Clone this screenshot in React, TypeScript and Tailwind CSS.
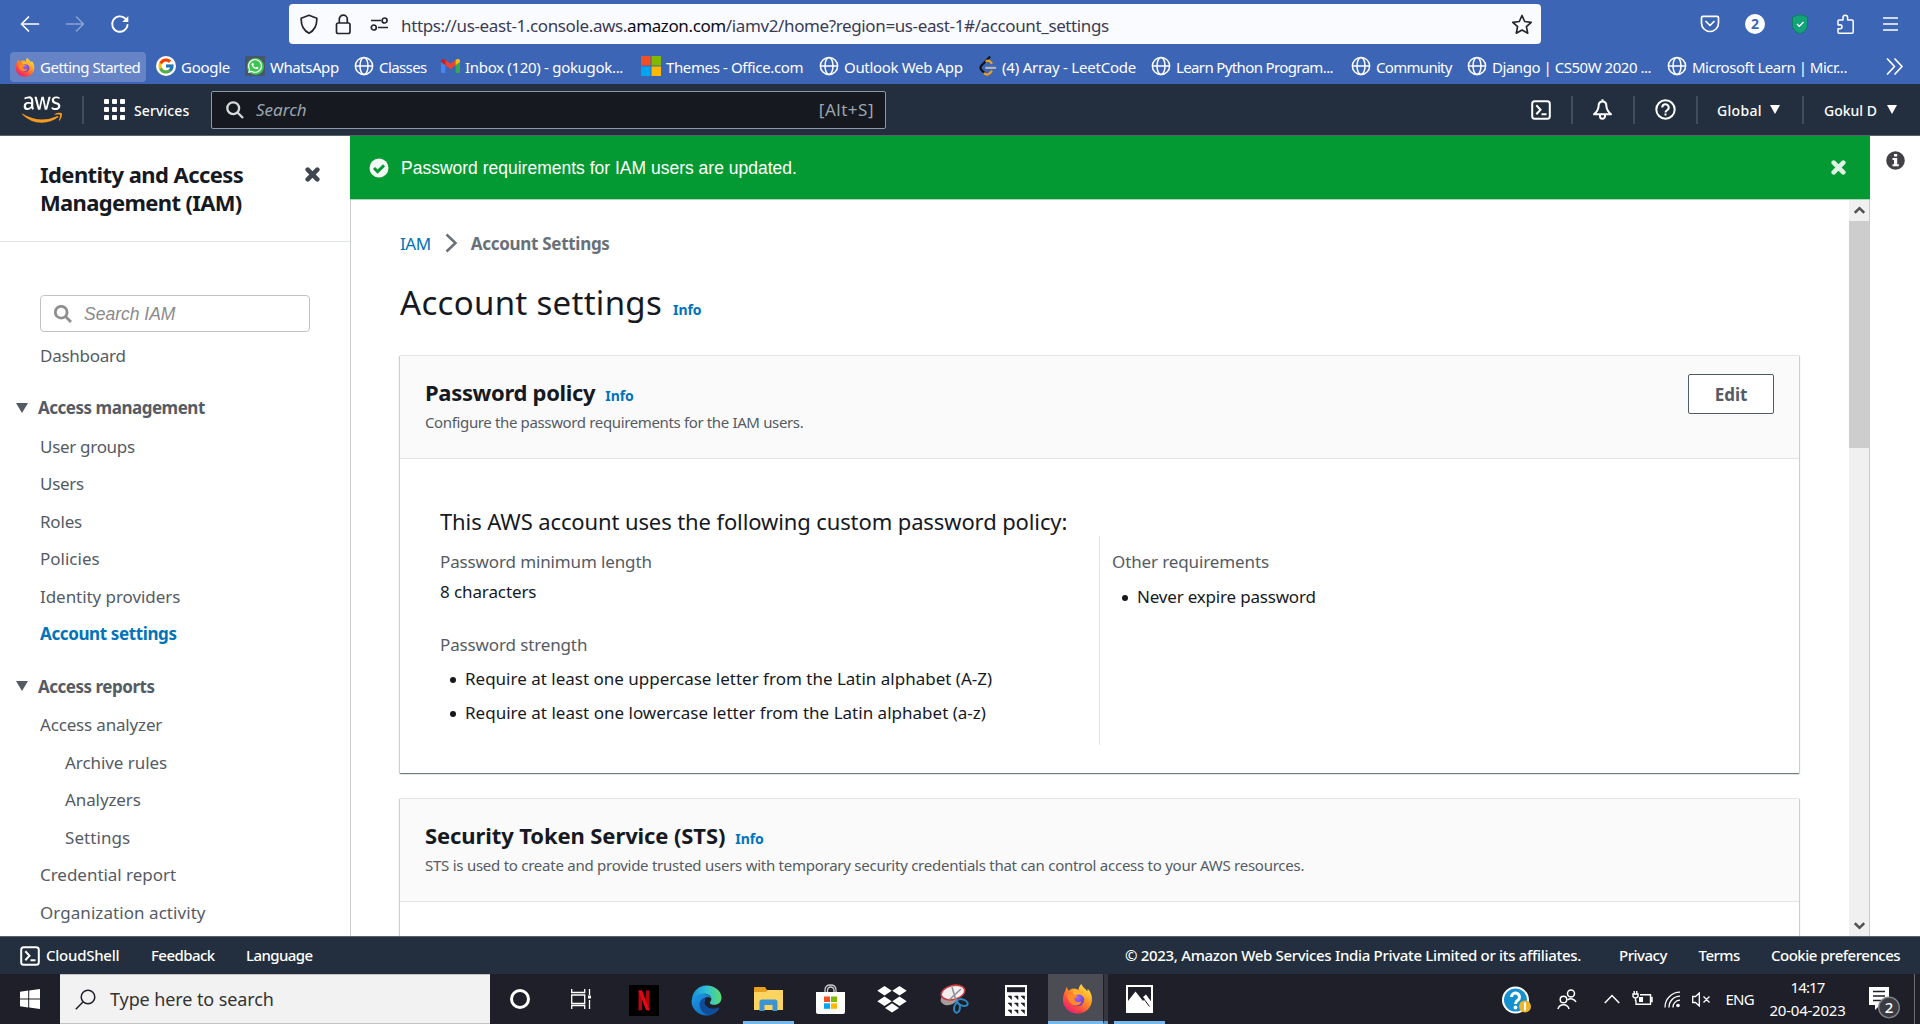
import type { ReactNode } from "react";
import { FcGoogle } from "react-icons/fc";
import { FaAws, FaWhatsapp } from "react-icons/fa";

const NOTO = "font-['Noto_Sans',sans-serif]";

/* ---------- drawings ---------- */

function Firefox({ size }: { size: number }) {
  return (
    <svg width={size} height={size} viewBox="0 0 32 32" className="shrink-0">
      <defs>
        <linearGradient id="ffBody" x1="0.85" y1="0.1" x2="0.2" y2="1">
          <stop offset="0" stopColor="#ffe14a" />
          <stop offset="0.35" stopColor="#ff9a1f" />
          <stop offset="0.7" stopColor="#ff4a45" />
          <stop offset="1" stopColor="#e5187c" />
        </linearGradient>
        <radialGradient id="ffCore" cx="0.5" cy="0.35" r="0.7">
          <stop offset="0" stopColor="#a366f5" />
          <stop offset="1" stopColor="#5a3bc4" />
        </radialGradient>
      </defs>
      <path
        d="M20 1c1 3 4 4.500 6 7.500c.6-.8.600-1.500.500-2.500C30 9.500 31 13.500 31 17c0 8-6.500 14.500-15 14.500S1 25 1 17.500C1 13.500 2 10 3.500 8c.1-1.500.7-3 1.700-4c.2 1.800.8 3 2 4c1-1 2.800-2.300 4.800-2.300c2.500 0 4 .8 5 1.800C17 5 18.300 2.500 20 1z"
        fill="url(#ffBody)"
      />
      <circle cx="16" cy="17" r="7" fill="url(#ffCore)" />
      <path d="M5 13c3-2 6-2 8-.5c1.500 0 2.800.3 3.300 1c-.5 1.400-3 1.400-3.300 2.500c0 1 .3 2 1.500 3c2 1.300 4 0 5.500.3c-1 3.500-4.500 4.700-8 3.500C8 21.500 6 17.500 5 13z" fill="#ff8a2b" />
      <path d="M12 6.500c2 .3 5 1.500 7 4c3-1 5 2 4.500 6c-.5-2-2.500-4-4.500-4.500c-3-.5-5 0-6.500.5C11 11 11 8 12 6.500z" fill="#ffb52e" />
    </svg>
  );
}

function GoogleMark() {
  return (
    <span className="flex size-5 shrink-0 items-center justify-center rounded-full bg-white">
      <FcGoogle size={18} />
    </span>
  );
}

function Globe() {
  return (
    <svg width="20" height="20" viewBox="0 0 20 20" fill="none" stroke="#fff" strokeWidth="1.500" className="shrink-0">
      <circle cx="10" cy="10" r="8.600" />
      <ellipse cx="10" cy="10" rx="4" ry="8.600" />
      <path d="M1.500 10h17" />
    </svg>
  );
}

function WhatsApp() {
  return (
    <span className="flex size-5 shrink-0 items-center justify-center bg-[#47576a]">
      <span className="flex size-[17px] items-center justify-center rounded-full bg-[#3fc351]">
        <FaWhatsapp size={16} color="#fff" />
      </span>
    </span>
  );
}

function Gmail() {
  return (
    <svg width="19" height="14" viewBox="0 0 19 14" className="shrink-0">
      <path d="M0 2v11q0 1 1 1h3.400V5z" fill="#4285f4" />
      <path d="M19 2v11q0 1-1 1h-3.400V5z" fill="#34a853" />
      <path d="M4.400 1v5.200L9.500 10l5.100-3.800V1L9.500 4.800z" fill="#ea4335" />
      <path d="M0 1.800C0 0 2 -.6 3.300.300L4.400 1v5.200L0 3z" fill="#c5221f" />
      <path d="M19 1.800C19 0 17-.6 15.700.300L14.600 1v5.200L19 3z" fill="#fbbc04" />
    </svg>
  );
}

function FourSquares({ size }: { size: number }) {
  return (
    <svg width={size} height={size} viewBox="0 0 21 21" className="shrink-0">
      <path d="M0 0h10v10H0z" fill="#f25022" />
      <path d="M11 0h10v10H11z" fill="#7fba00" />
      <path d="M0 11h10v10H0z" fill="#00a4ef" />
      <path d="M11 11h10v10H11z" fill="#ffb900" />
    </svg>
  );
}

function LeetCode() {
  return (
    <svg width="18" height="20" viewBox="0 0 18 20" fill="none" strokeWidth="2.200" strokeLinecap="round" className="shrink-0">
      <path d="M10.500 1.200L2.500 9.500q-2 2.300 0 4.500l3 3" stroke="#111" />
      <path d="M5.500 17.500q2.500 2.300 5 0l2-2M7.500 5.200l.5-.4q1.800-.7 3 .7l1.500 1.500" stroke="#f0a21f" />
      <path d="M7.200 11.800h9" stroke="#b3b3b3" />
    </svg>
  );
}

function CloudShell({ size }: { size: number }) {
  return (
    <svg width={size} height={size} viewBox="0 0 20 20" fill="none" stroke="#fff" strokeWidth="2" className="shrink-0">
      <rect x="1.200" y="1.200" width="17.600" height="17.600" rx="2.500" />
      <path d="M5.300 5.300l4.200 4.500l-4.200 4.500M10.500 14.300h5" />
    </svg>
  );
}

function Magnifier({ size, color, width }: { size: number; color: string; width: number }) {
  return (
    <svg width={size} height={size} viewBox="0 0 18 18" fill="none" stroke={color} strokeWidth={width} className="shrink-0">
      <circle cx="7.200" cy="7.200" r="5.900" />
      <path d="M11.500 11.500L17 17" />
    </svg>
  );
}

function Cross({ color }: { color: string }) {
  return (
    <svg width="15" height="15" viewBox="0 0 15 15" stroke={color} strokeWidth="4.600" strokeLinecap="round" className="shrink-0">
      <path d="M2.700 2.700l9.600 9.600M12.300 2.700l-9.600 9.600" />
    </svg>
  );
}

function Down({ w, h, color }: { w: number; h: number; color: string }) {
  return (
    <svg width={w} height={h} viewBox="0 0 10 10" preserveAspectRatio="none" className="shrink-0">
      <path d="M0 0h10L5 10z" fill={color} />
    </svg>
  );
}

/* ---------- browser chrome ---------- */

function Toolbar() {
  return (
    <div className="flex h-12 items-center">
      <svg width="20" height="18" viewBox="0 0 20 18" fill="none" stroke="#fff" strokeWidth="1.700" strokeLinecap="round" strokeLinejoin="round" className="ml-5 shrink-0">
        <path d="M18.500 9H1.500M8.500 2L1.500 9l7 7" />
      </svg>
      <svg width="20" height="18" viewBox="0 0 20 18" fill="none" stroke="#8aa2d6" strokeWidth="1.500" strokeLinecap="round" strokeLinejoin="round" className="ml-[25px] shrink-0">
        <path d="M1.500 9h17M11.500 2l7 7l-7 7" />
      </svg>
      <svg width="20" height="20" viewBox="0 0 20 20" fill="none" stroke="#fff" strokeWidth="1.900" strokeLinecap="round" className="ml-[25px] shrink-0">
        <path d="M17.500 11a7.700 7.700 0 1 1-2.300-6.500" />
        <path d="M18.300 2v6h-6z" fill="#fff" stroke="none" />
      </svg>
      <div className="ml-[159px] flex h-10 w-[1252px] shrink-0 items-center rounded-[4px] bg-[#fafbfe] text-[#15141a]">
        <svg width="20" height="20" viewBox="0 0 20 20" fill="none" stroke="#26262e" strokeWidth="1.700" strokeLinejoin="round" className="ml-[10px]">
          <path d="M10 1.200l7.800 3c.3 6.500-2 12-7.800 15c-5.800-3-8.100-8.500-7.800-15z" />
        </svg>
        <svg width="17" height="21" viewBox="0 0 17 21" fill="none" stroke="#26262e" strokeWidth="1.700" className="ml-[16px]">
          <rect x="1.500" y="9" width="13.500" height="10.500" rx="1.800" />
          <path d="M4.300 9V5.200a4 4 0 0 1 8 0V9" />
        </svg>
        <svg width="19" height="14" viewBox="0 0 19 14" fill="none" stroke="#26262e" strokeWidth="1.700" className="ml-[18px]">
          <path d="M1 3.500h10M8 10.500h10" />
          <circle cx="14.600" cy="3.500" r="2.500" />
          <circle cx="3.800" cy="10.500" r="2.500" />
        </svg>
        <span className="ml-[12px] mt-[3px] flex-1 whitespace-nowrap text-[17px] leading-none tracking-[-0.38px] text-[#3b3b55]">
          https://us-east-1.console.aws.<span className="text-[#0c0c13]">amazon.com</span>/iamv2/home?region=us-east-1#/account_settings
        </span>
        <svg width="22" height="21" viewBox="0 0 22 21" fill="none" stroke="#26262e" strokeWidth="1.700" strokeLinejoin="round" className="mr-[8px]">
          <path d="M11 1.500l2.700 6l6.500.8l-4.800 4.400l1.300 6.500L11 16l-5.700 3.200l1.300-6.500L1.800 8.300l6.500-.8z" />
        </svg>
      </div>
      <svg width="20" height="18" viewBox="0 0 20 18" fill="none" stroke="#fff" strokeWidth="1.700" strokeLinecap="round" strokeLinejoin="round" className="ml-[159px] shrink-0">
        <path d="M3 1.300h14q1.500 0 1.500 1.500V8a8.500 8.500 0 0 1-17 0V2.800q0-1.500 1.500-1.500z" />
        <path d="M6 6.500l4 4l4-4" />
      </svg>
      <span className="ml-[25px] flex size-5 shrink-0 items-center justify-center rounded-full bg-white text-[14px] font-bold leading-none text-[#3d65b5]">2</span>
      <svg width="18" height="20" viewBox="0 0 18 20" className="ml-[26px] shrink-0">
        <path d="M9 .5l7.500 2.500v8c0 4-3 7-7.500 8.700C4.500 18 1.500 15 1.500 11V3z" fill="#12a378" stroke="#0c7f63" />
        <path d="M6 10l2.300 2.300L12.500 8" fill="none" stroke="#fff" strokeWidth="1.300" />
      </svg>
      <svg width="19" height="21" viewBox="0 0 19 21" fill="none" stroke="#fff" strokeWidth="1.500" strokeLinejoin="round" className="ml-[27px] shrink-0">
        <path d="M2 11V7q0-1 1-1h4V3.500a2.300 2.300 0 0 1 4.600 0V6H16q1.200 0 1.200 1.200V18q0 1.300-1.200 1.300H3Q2 19.300 2 18v-3.300h2a2 2 0 0 0 0-4z" />
      </svg>
      <svg width="15" height="14" viewBox="0 0 15 14" stroke="#fff" strokeWidth="1.600" className="ml-[28px] shrink-0">
        <path d="M0 1h15M0 7h15M0 13h15" />
      </svg>
    </div>
  );
}

type Bookmark = { label: string; icon: ReactNode; cell: string; text: string };

const bookmarks: Bookmark[] = [
  { label: "Google", icon: <GoogleMark />, cell: "w-[89px]", text: "tracking-[-0.27px]" },
  { label: "WhatsApp", icon: <WhatsApp />, cell: "w-[109px]", text: "tracking-[-0.45px]" },
  { label: "Classes", icon: <Globe />, cell: "w-[87px]", text: "tracking-[-0.6px]" },
  { label: "Inbox (120) - gokugok...", icon: <Gmail />, cell: "w-[200px]", text: "tracking-[-0.31px]" },
  { label: "Themes - Office.com", icon: <FourSquares size={20} />, cell: "w-[178px]", text: "tracking-[-0.38px]" },
  { label: "Outlook Web App", icon: <Globe />, cell: "w-[160px]", text: "tracking-[-0.33px]" },
  { label: "(4) Array - LeetCode", icon: <LeetCode />, cell: "w-[172px]", text: "tracking-[-0.21px]" },
  { label: "Learn Python Program...", icon: <Globe />, cell: "w-[200px]", text: "tracking-[-0.63px]" },
  { label: "Community", icon: <Globe />, cell: "w-[116px]", text: "tracking-[-0.7px]" },
  { label: "Django | CS50W 2020 ...", icon: <Globe />, cell: "w-[200px]", text: "tracking-[-0.47px]" },
  { label: "Microsoft Learn | Micr...", icon: <Globe />, cell: "w-[219px]", text: "tracking-[-0.49px]" },
];

function Bookmarks() {
  return (
    <div className="flex h-9 items-center whitespace-nowrap text-[15px] leading-none text-white">
      <div className="ml-[10px] mr-[10px] mt-px flex h-[30px] w-[136px] shrink-0 items-center gap-[5px] rounded-[4px] bg-[#6683c6] pl-[5px] tracking-[-0.5px]">
        <Firefox size={20} />
        <span className="pt-px">Getting Started</span>
      </div>
      {bookmarks.map((b) => (
        <div key={b.label} className={`flex shrink-0 items-center gap-[5px] ${b.cell} ${b.text}`}>
          {b.icon}
          <span className="pt-[2px]">{b.label}</span>
        </div>
      ))}
      <svg width="18" height="17" viewBox="0 0 18 17" fill="none" stroke="#fff" strokeWidth="1.700" strokeLinecap="round" strokeLinejoin="round" className="shrink-0">
        <path d="M1.500 1l7 7.500l-7 7.500M9 1l7 7.500L9 16" />
      </svg>
    </div>
  );
}

/* ---------- AWS header ---------- */

const rule = "h-7 w-[2px] shrink-0 bg-[#414d5c]";

function AwsHeader() {
  return (
    <header className="flex h-[52px] items-center border-b border-[#59636d] bg-[#232f3e] text-[14px] font-medium leading-none text-white">
      <svg width="0" height="0" className="w-0">
        <linearGradient id="awsTwoTone" gradientUnits="userSpaceOnUse" x1="0" y1="0" x2="0" y2="512">
          <stop offset="0.56" stopColor="#fff" />
          <stop offset="0.56" stopColor="#f79a1e" />
        </linearGradient>
      </svg>
      <FaAws className="ml-[22px] h-[35px] w-[40px] shrink-0" preserveAspectRatio="none" fill="url(#awsTwoTone)" />
      <span className={`ml-5 ${rule}`} />
      <span className="ml-5 grid shrink-0 grid-cols-3 gap-[3px]">
        {Array.from({ length: 9 }, (_, i) => (
          <span key={i} className="size-[5px] rounded-[1px] bg-white" />
        ))}
      </span>
      <span className="ml-[9px] mt-[2px] w-[77px] shrink-0 tracking-[0.1px]">Services</span>
      <div className="flex h-[38px] w-[675px] shrink-0 items-center rounded-[2px] border border-[#8d99a8] bg-[#16191f] pl-[14px] pr-[11px] text-[17px] font-normal text-[#9aa5b1]">
        <Magnifier size={18} color="#d5dbdb" width={2.3} />
        <span className="ml-3 flex-1 italic">Search</span>
        <span className="tracking-[0.5px]">[Alt+S]</span>
      </div>
      <span className="flex-1" />
      <CloudShell size={20} />
      <span className={`ml-5 ${rule}`} />
      <svg width="21" height="21" viewBox="0 0 21 21" fill="none" stroke="#fff" strokeWidth="2" strokeLinejoin="round" className="ml-[19px] shrink-0">
        <path d="M10.500 2.500c-2.600 0-3.900 2-3.900 4.500c0 3.500-1.500 5.500-4.600 8.300h17c-3.100-2.800-4.600-4.800-4.600-8.300c0-2.500-1.300-4.500-3.900-4.500zM10.500 .3v2.200M8 16v1.300a2.500 2.500 0 0 0 5 0V16" />
      </svg>
      <span className={`ml-5 ${rule}`} />
      <svg width="21" height="21" viewBox="0 0 21 21" fill="none" stroke="#fff" strokeWidth="2" className="ml-5 shrink-0">
        <circle cx="10.500" cy="10.500" r="9.200" />
        <path d="M7.300 8.500a3.200 3.200 0 1 1 4.700 2.800q-1.500.8-1.500 2.200M10.500 14.600v2" />
      </svg>
      <span className={`ml-5 ${rule}`} />
      <span className="ml-[19px] mt-[2px] w-[53px] shrink-0 tracking-[0.3px]">Global</span>
      <Down w={10} h={9} color="#fff" />
      <span className={`ml-[22px] ${rule}`} />
      <span className="ml-5 mt-[2px] w-[63px] shrink-0">Gokul D</span>
      <Down w={10} h={9} color="#fff" />
      <span className="w-[23px] shrink-0" />
    </header>
  );
}

/* ---------- IAM sidebar ---------- */

type NavItem = { label: string; text?: string; nested?: boolean; active?: boolean };

const management: NavItem[] = [
  { label: "User groups", text: "tracking-[-0.3px]" },
  { label: "Users", text: "tracking-[-0.3px]" },
  { label: "Roles", text: "tracking-[-0.2px]" },
  { label: "Policies", text: "tracking-[0px]" },
  { label: "Identity providers", text: "tracking-[-0.06px]" },
  { label: "Account settings", text: "tracking-[-0.38px]", active: true },
];

const reports: NavItem[] = [
  { label: "Access analyzer", text: "tracking-[-0.17px]" },
  { label: "Archive rules", text: "tracking-[-0.06px]", nested: true },
  { label: "Analyzers", text: "tracking-[-0.1px]", nested: true },
  { label: "Settings", text: "tracking-[0.08px]", nested: true },
  { label: "Credential report", text: "tracking-[-0.03px]" },
  { label: "Organization activity", text: "tracking-[0.06px]" },
];

function NavGroup({ title, items }: { title: string; items: NavItem[] }) {
  return (
    <>
      <div className="mb-px mt-[15px] flex h-[37.500px] items-center gap-[10px] pl-4 font-bold tracking-[-0.48px]">
        <Down w={12} h={10} color="#545b64" />
        {title}
      </div>
      {items.map((n) => (
        <div
          key={n.label}
          className={`flex h-[37.500px] items-center ${n.nested ? "pl-[65px]" : "pl-10"} ${n.text ?? ""} ${n.active ? "font-bold text-[#0073bb]" : ""}`}
        >
          {n.label}
        </div>
      ))}
    </>
  );
}

function Sidebar() {
  return (
    <aside className="w-[351px] shrink-0 overflow-hidden border-r border-[#c9cccd] bg-white text-[17px] leading-none text-[#545b64]">
      <div className="flex h-[106px] justify-between border-b border-[#e3e6e6] pl-10 pr-[30px] pt-[24px]">
        <h2 className="text-[22px] font-bold leading-[28px] tracking-[-0.57px] text-[#16191f]">
          Identity and Access
          <br />
          <span className="tracking-[-0.65px]">Management (IAM)</span>
        </h2>
        <span className="pt-[7px]">
          <Cross color="#414750" />
        </span>
      </div>
      <div className="ml-10 mt-[53px] flex h-[37px] w-[270px] items-center rounded-[4px] border border-[#c0c4c6] pl-[13px]">
        <Magnifier size={18} color="#8f8f8f" width={2.8} />
        <span className="ml-3 pt-[2px] font-['Liberation_Sans',sans-serif] text-[17.500px] italic text-[#8a8a8a]">Search IAM</span>
      </div>
      <div className="mt-[4.500px] flex h-[37.500px] items-center pl-10 tracking-[-0.25px]">Dashboard</div>
      <NavGroup title="Access management" items={management} />
      <NavGroup title="Access reports" items={reports} />
    </aside>
  );
}

/* ---------- content ---------- */

function Info() {
  return <a className="text-[14px] font-bold tracking-[-0.1px] text-[#0073bb]">Info</a>;
}

function PanelHeader({
  title,
  titleClass,
  desc,
  descClass,
  action,
}: {
  title: string;
  titleClass: string;
  desc: string;
  descClass: string;
  action?: ReactNode;
}) {
  return (
    <div className="flex h-[103px] justify-between border-b border-[#e3e6e6] bg-[#fafafa] pl-[25px] pr-[25px]">
      <div className="pt-[22px]">
        <div className="flex h-[29px] items-baseline gap-[10px] leading-[29px]">
          <h2 className={`text-[22px] font-bold text-[#16191f] ${titleClass}`}>{title}</h2>
          <Info />
        </div>
        <p className={`mt-[3px] whitespace-nowrap text-[15px] leading-6 text-[#545b64] ${descClass}`}>{desc}</p>
      </div>
      {action}
    </div>
  );
}

const panel = "border-t border-[#e3e6e6] bg-white shadow-[0_1px_1px_0_rgba(0,28,36,.4),1px_1px_1px_0_rgba(0,28,36,.15),-1px_1px_1px_0_rgba(0,28,36,.15)]";

function Bullet({ children, className }: { children: ReactNode; className: string }) {
  return (
    <li className={`flex h-[34px] items-center pl-[10px] text-[#16191f] ${className}`}>
      <span className="mr-[9px] mt-[2px] size-[6px] rounded-full bg-[#16191f]" />
      {children}
    </li>
  );
}

function Content() {
  return (
    <main className="min-w-0 flex-1 overflow-hidden bg-white pl-[49px] pr-[50px]">
      <nav className="mt-[31px] flex h-6 items-center text-[17px] leading-none">
        <a className="text-[#0073bb] tracking-[-0.4px]">IAM</a>
        <svg width="13" height="20" viewBox="0 0 13 20" fill="none" stroke="#687078" strokeWidth="2.500" className="ml-[14px] mr-[13px]">
          <path d="M1.500 1.500l9 8.500l-9 8.500" />
        </svg>
        <span className="font-bold tracking-[-0.3px] text-[#687078]">Account Settings</span>
      </nav>
      <div className="mt-[24px] flex h-12 items-baseline gap-[11px] leading-[48px]">
        <h1 className="text-[33px] tracking-[0.3px] text-[#16191f]">Account settings</h1>
        <Info />
      </div>

      <section className={`mt-[28px] h-[418px] ${panel}`}>
        <PanelHeader
          title="Password policy"
          titleClass="tracking-[-0.33px]"
          desc="Configure the password requirements for the IAM users."
          descClass="tracking-[-0.36px]"
          action={
            <button className="mt-[18px] h-10 w-[86px] rounded-[2px] border border-[#545b64] bg-white text-[17px] font-bold leading-none text-[#545b64]">
              Edit
            </button>
          }
        />
        <div className="pl-10 pt-[47px] text-[17px] leading-none text-[#545b64]">
          <h3 className="flex h-[30px] items-center text-[22px] tracking-[-0.11px] text-[#16191f]">
            This AWS account uses the following custom password policy:
          </h3>
          <div className="flex h-[209px]">
            <div className="w-[659px] pt-[10.500px]">
              <p className="flex h-[30px] items-center tracking-[-0.13px]">Password minimum length</p>
              <p className="flex h-[30px] items-center tracking-[-0.1px] text-[#16191f]">8 characters</p>
              <p className="mt-[23px] flex h-[30px] items-center tracking-[-0.13px]">Password strength</p>
              <ul className="mt-[2px]">
                <Bullet className="tracking-[0px]">Require at least one uppercase letter from the Latin alphabet (A-Z)</Bullet>
                <Bullet className="tracking-[0.01px]">Require at least one lowercase letter from the Latin alphabet (a-z)</Bullet>
              </ul>
            </div>
            <div className="border-l border-[#e3e6e6] pl-3 pt-[10.500px]">
              <p className="flex h-[30px] items-center tracking-[-0.12px]">Other requirements</p>
              <ul className="mt-[3px]">
                <Bullet className="tracking-[-0.19px]">Never expire password</Bullet>
              </ul>
            </div>
          </div>
        </div>
      </section>

      <section className={`mt-[25px] h-[300px] ${panel}`}>
        <PanelHeader
          title="Security Token Service (STS)"
          titleClass="tracking-[-0.1px]"
          desc="STS is used to create and provide trusted users with temporary security credentials that can control access to your AWS resources."
          descClass="tracking-[-0.255px]"
        />
      </section>
    </main>
  );
}

function Scrollbar() {
  return (
    <div className="flex w-[21px] shrink-0 flex-col items-center border-r border-[#c9cccd] bg-[#f0f0f0]">
      <div className="flex h-[21px] items-center justify-center pb-[2px]">
        <svg width="11" height="8" viewBox="0 0 11 8" fill="none" stroke="#505050" strokeWidth="2.500">
          <path d="M.8 6.800l4.700-4.600l4.700 4.600" />
        </svg>
      </div>
      <div className="h-[227px] w-full bg-[#cdcdcd]" />
      <div className="flex-1" />
      <div className="flex h-[21px] items-center justify-center">
        <svg width="11" height="8" viewBox="0 0 11 8" fill="none" stroke="#505050" strokeWidth="2.500">
          <path d="M.8 1.200l4.700 4.600l4.700-4.600" />
        </svg>
      </div>
    </div>
  );
}

/* ---------- footer ---------- */

function Footer() {
  return (
    <footer className="flex h-[38px] shrink-0 items-center border-t border-[#59636d] bg-[#232f3e] pl-5 pr-5 text-[15px] font-medium leading-none text-white">
      <CloudShell size={20} />
      <span className="ml-[6px] w-[105px] shrink-0 tracking-[-0.25px]">CloudShell</span>
      <span className="w-[95px] shrink-0 tracking-[-0.57px]">Feedback</span>
      <span className="shrink-0 tracking-[-0.6px]">Language</span>
      <span className="flex-1" />
      <span className="w-[494px] shrink-0 whitespace-nowrap tracking-[-0.32px]">© 2023, Amazon Web Services India Private Limited or its affiliates.</span>
      <span className="w-[79.500px] shrink-0 tracking-[-0.5px]">Privacy</span>
      <span className="w-[72.500px] shrink-0 tracking-[-0.5px]">Terms</span>
      <span className="w-[129px] shrink-0 whitespace-nowrap tracking-[-0.5px]">Cookie preferences</span>
    </footer>
  );
}

/* ---------- Windows taskbar ---------- */

function Netflix() {
  return (
    <svg width="30" height="31" viewBox="0 0 30 31">
      <path d="M0 0h30v31H0z" fill="#000" />
      <path d="M9.500 5.500h3.600V25l-3.600.5zM17 5.500h3.500v20L17 25z" fill="#b1060f" />
      <path d="M9.500 5.500h3.600l7.400 20L17 25z" fill="#e50914" />
    </svg>
  );
}

function Edge() {
  return (
    <svg width="31" height="31" viewBox="0 0 32 32">
      <defs>
        <linearGradient id="edgeTop" x1="0" y1="0.5" x2="1" y2="0.45">
          <stop offset="0" stopColor="#1a8fd8" />
          <stop offset="0.5" stopColor="#2fc0d8" />
          <stop offset="1" stopColor="#5fdc6c" />
        </linearGradient>
        <linearGradient id="edgeLow" x1="0" y1="0" x2="1" y2="1">
          <stop offset="0" stopColor="#1c9be6" />
          <stop offset="1" stopColor="#0f5fb4" />
        </linearGradient>
      </defs>
      <path d="M.6 16C1.500 11.500 7 8.500 13 9c4 .3 7 2.500 8 5c-2-1.500-4-2-6-1l-2 7l8 6l8-1.500c-3 4-7 7-13 7C8 31.500 0 25 .6 16z" fill="url(#edgeLow)" />
      <path d="M1 14C2 6 8.500.5 16 .5c9 0 15.500 6 15.500 12.500c0 5-3.500 7.500-7.500 7.500c-3 0-4.500-1-4.500-2.300c0-1 1.500-1.500 1.500-3.700c0-3-3-5.500-7.500-5.500C7 9 2.500 12 1 17z" fill="url(#edgeTop)" />
      <path d="M16 12.500c-4.500 1-7.500 4.500-7 9c.4 4.500 4 8.500 9.500 9.700c4.500-.7 8.500-3.500 10.500-7.200c.4-.9-.3-1-.9-.7c-2 1-4 1.200-6 1C17 24 14 21 14 17.500c0-2 .7-3.800 2-5z" fill="#0f4c99" />
    </svg>
  );
}

function Explorer() {
  return (
    <svg width="29" height="25" viewBox="0 0 29 25">
      <path d="M0 1q0-1 1-1h10l2 3h15q1 0 1 1v4H0z" fill="#e7a021" />
      <path d="M0 5h12l2-2h15v20H0z" fill="#fcd45f" />
      <path d="M5.500 24v-9q0-2.500 2.500-2.500h13q2.500 0 2.500 2.500v9h-5v-6h-8v6z" fill="#3d94d2" />
    </svg>
  );
}

function Store() {
  return (
    <svg width="29" height="31" viewBox="0 0 29 31">
      <path d="M9 9V6q0-5 5.500-5T20 6v3M11.500 9V6q.5-3 3-3q3 0 3.500 3v3" fill="none" stroke="#c9c9cc" strokeWidth="1.300" />
      <path d="M0 8h29v20q0 2-2 2H2q-2 0-2-2z" fill="#fff" />
      <path d="M8 12.500h6V18H8z" fill="#f25022" />
      <path d="M15 12.500h6V18h-6z" fill="#7fba00" />
      <path d="M8 19.300h6v5.500H8z" fill="#00a4ef" />
      <path d="M15 19.300h6v5.500h-6z" fill="#ffb900" />
    </svg>
  );
}

function Dropbox() {
  return (
    <svg width="30" height="27" viewBox="0 0 30 27" fill="#fff">
      <path d="M7.500 0l7.200 4.800l-7.200 4.800L.3 4.800zM22.500 0l7.200 4.800l-7.200 4.800l-7.200-4.800zM7.500 10.400l7.200 4.800l-7.200 4.800l-7.200-4.800zM22.500 10.400l7.200 4.800l-7.200 4.800l-7.200-4.800zM15 17.200l7 4.700l-7 4.700l-7-4.700z" />
    </svg>
  );
}

function Snip() {
  return (
    <svg width="29" height="30" viewBox="0 0 29 30">
      <ellipse cx="9" cy="15" rx="8.500" ry="6" transform="rotate(-15 9 15)" fill="#a99a9c" />
      <ellipse cx="13" cy="8.500" rx="12" ry="7" transform="rotate(-14 13 8.500)" fill="#f4f0f0" stroke="#cc3b3f" strokeWidth="1.600" />
      <path d="M12 3l5 17M21 5L9 16" stroke="#8c9097" strokeWidth="1.600" />
      <g fill="none" stroke="#2c88c4" strokeWidth="2">
        <ellipse cx="22.500" cy="18.500" rx="5.400" ry="3" transform="rotate(20 22.500 18.500)" />
        <ellipse cx="17" cy="24" rx="2.900" ry="4.700" transform="rotate(8 17 24)" />
      </g>
    </svg>
  );
}

function Calculator() {
  return (
    <svg width="22" height="31" viewBox="0 0 22 31">
      <path d="M0 0h22v31H0z" fill="#fff" />
      <path d="M2 2.200h18v5H2z" fill="#1e1f28" />
      {[11, 18, 25].map((y) =>
        [3, 9.500, 16].map((x) => <path key={`${x}-${y}`} d={`M${x} ${y}h3.500v3.500z`} fill="#1e1f28" stroke="#1e1f28" strokeWidth="0.600" />),
      )}
    </svg>
  );
}

function Photos() {
  return (
    <svg width="27" height="28" viewBox="0 0 27 28">
      <path d="M0 0h27v28H0z" fill="#fff" />
      <path d="M2 2h23v16l-5-5.500l-3 3.500L9.500 6.500L2 16z" fill="#1e1f28" />
      <path d="M17 12l3-2.500l5.500 7.500v5z" fill="#fff" />
      <path d="M17.500 13.500l6 8" stroke="#1e1f28" strokeWidth="1" />
    </svg>
  );
}

const cell = "flex h-full w-[62px] shrink-0 items-center justify-center";

function RunningCell({ children }: { children: ReactNode }) {
  return (
    <div className="flex h-full w-[62px] shrink-0 flex-col items-center">
      <div className="flex flex-1 items-center pt-[3px]">{children}</div>
      <div className="h-[3px] w-[51px] bg-[#76b9ed]" />
    </div>
  );
}

function Taskbar() {
  return (
    <div className="flex h-[50px] shrink-0 items-center bg-[#1e1f28] leading-none text-white">
      <div className="flex h-full w-[60px] shrink-0 items-center justify-center">
        <svg width="20" height="20" viewBox="0 0 20 20" fill="#fff">
          <path d="M0 2.800l8.200-1.200v7.900H0zM9.200 1.400L20 0v9.500H9.200zM0 10.500h8.200v7.900L0 17.200zM9.200 10.500H20V20L9.200 18.600z" />
        </svg>
      </div>
      <div className="flex h-full w-[430px] shrink-0 items-center border-y border-[#c4c4c6] bg-[#f2f2f3] pl-[15px]">
        <svg width="21" height="21" viewBox="0 0 21 21" fill="none" stroke="#1e1f28" strokeWidth="1.500">
          <circle cx="13" cy="8" r="6.800" />
          <path d="M8.200 12.800L.8 20.200" />
        </svg>
        <span className="ml-[14px] text-[18px] tracking-[-0.1px] text-[#333]">Type here to search</span>
      </div>
      <div className="flex h-full w-[60px] shrink-0 items-center justify-center">
        <span className="size-[20px] rounded-full border-[3px] border-white" />
      </div>
      <div className="flex h-full w-[63px] shrink-0 items-center justify-center">
        <svg width="21" height="20" viewBox="0 0 21 20" fill="none" stroke="#fff" strokeWidth="1.300">
          <path d="M.7 0v3.500h13V0M.7 6h13v8.500h-13zM.7 20v-3.500h13V20M18.500 0v6M18.500 11v9" />
          <path d="M17 6.500h3v3h-3z" fill="#fff" stroke="none" />
        </svg>
      </div>
      <div className={`${cell} pt-[2px]`}><Netflix /></div>
      <div className={`${cell} pt-[2px]`}><Edge /></div>
      <RunningCell><Explorer /></RunningCell>
      <div className={cell}><Store /></div>
      <div className={cell}><Dropbox /></div>
      <div className={cell}><Snip /></div>
      <div className="flex h-full w-[63px] shrink-0 items-center justify-center pr-[2px] pt-[2px]"><Calculator /></div>
      <div className="flex h-full w-[60px] shrink-0">
        <div className="flex w-[56px] flex-col items-center border-b-[3px] border-[#76b9ed] bg-[#4b4c54] pl-[3px] pt-[9px]">
          <Firefox size={31} />
        </div>
        <div className="w-[5px] border-b-[3px] border-l border-b-[#5f97c3] border-l-[#1e1f28] bg-[#35363f]" />
      </div>
      <RunningCell><Photos /></RunningCell>
      <span className="flex-1" />

      <svg width="30" height="30" viewBox="0 0 30 30" className="mt-1 shrink-0">
        <circle cx="13.500" cy="14" r="12.500" fill="#1490cf" stroke="#fff" strokeWidth="2" />
        <path d="M9.500 11a4 4 0 1 1 6 3.500q-2 1.200-2 3.500" fill="none" stroke="#fff" strokeWidth="3" />
        <circle cx="13.500" cy="21.500" r="1.900" fill="#fff" />
        <circle cx="23" cy="20.500" r="6" fill="#efb32c" />
        <path d="M23 16.500v8" stroke="#fff" strokeWidth="2" />
      </svg>
      <svg width="20" height="21" viewBox="0 0 20 21" fill="none" stroke="#fff" strokeWidth="1.500" className="ml-[25px] shrink-0">
        <circle cx="14" cy="4.500" r="3.500" />
        <path d="M10.500 11a5.500 5.500 0 0 1 8.500 2" />
        <circle cx="6.500" cy="10.500" r="3.300" />
        <path d="M1 20a5.700 5.700 0 0 1 11 0" />
      </svg>
      <svg width="16" height="10" viewBox="0 0 16 10" fill="none" stroke="#fff" strokeWidth="1.500" className="ml-[27px] shrink-0">
        <path d="M.8 9l7.200-7.500L15.200 9" />
      </svg>
      <svg width="21" height="16" viewBox="0 0 21 16" fill="none" stroke="#fff" strokeWidth="1.400" className="ml-[12px] shrink-0">
        <path d="M8 3.700h10.500v9.600H4V9.500M18.500 6.500H20v4h-1.500" />
        <path d="M7 6h4v5H7z" fill="#fff" stroke="none" />
        <path d="M1 3h5v2.500q-1 1.500-2.500 1.500T1 5.500zM2.200 0v3M4.800 0v3M3.500 7v3" />
      </svg>
      <svg width="18" height="17" viewBox="0 0 18 17" fill="none" stroke="#fff" strokeWidth="1.300" className="ml-[11px] shrink-0">
        <path d="M1 16.500A15 15 0 0 1 16 1.200M5 16.500A11 11 0 0 1 16 5.200M9 16.500A7 7 0 0 1 16 9.200" />
        <circle cx="14" cy="14.500" r="1.800" fill="#fff" stroke="none" />
      </svg>
      <svg width="19" height="15" viewBox="0 0 19 15" fill="none" stroke="#fff" strokeWidth="1.300" className="ml-[10px] shrink-0">
        <path d="M.7 4.500h2.800l3.800-3.500v13L3.500 10.500H.7zM11.500 4.500l6 6M17.500 4.500l-6 6" />
      </svg>
      <span className="ml-[14px] shrink-0 text-[15px] tracking-[-0.7px]">ENG</span>
      <div className="ml-[15px] flex w-[77px] shrink-0 flex-col items-center gap-[8px] text-[15px]">
        <span className="tracking-[-0.87px]">14:17</span>
        <span className="whitespace-nowrap tracking-[-0.23px]">20-04-2023</span>
      </div>
      <svg width="32" height="32" viewBox="0 0 32 32" className="ml-[23px] mt-2 shrink-0">
        <path d="M0 0h20v18h-9l-5 5v-5H0z" fill="#fff" />
        <path d="M4 4.500h12M4 9h12M4 13.500h8" stroke="#1e1f28" strokeWidth="1.500" />
        <circle cx="20" cy="20.500" r="10.300" fill="#3a3b43" stroke="#85868b" strokeWidth="1.300" />
        <text x="20" y="25.800" textAnchor="middle" fill="#fff" fontSize="15" fontWeight="500">2</text>
      </svg>
      <span className="ml-[13px] mr-[5px] h-full w-px shrink-0 bg-[#6b6c72]" />
    </div>
  );
}

export default function App() {
  return (
    <div className={`flex h-[1024px] w-[1920px] flex-col overflow-hidden bg-white ${NOTO}`}>
      <div className="h-[84px] shrink-0 bg-[#3d65b5]">
        <Toolbar />
        <Bookmarks />
      </div>
      <AwsHeader />
      <div className="flex h-[800px] shrink-0">
        <Sidebar />
        <div className="flex w-[1519px] shrink-0 flex-col">
          <div className="-ml-px flex h-16 shrink-0 items-center border-b border-[#a8d8b6] bg-[#049a33] pl-[19px] pr-[24px] text-white">
            <svg width="20" height="20" viewBox="0 0 20 20" className="shrink-0">
              <circle cx="10" cy="10" r="9.500" fill="#f3f8f4" />
              <path d="M5 10l3.600 3.600l6.400-6.200" fill="none" stroke="#049a33" strokeWidth="3" />
            </svg>
            <span className="ml-[12px] flex-1 pt-[2px] font-['Liberation_Sans',sans-serif] text-[17.500px] leading-none">
              Password requirements for IAM users are updated.
            </span>
            <Cross color="#dff1e4" />
          </div>
          <div className="flex min-h-0 flex-1">
            <Content />
            <Scrollbar />
          </div>
        </div>
        <div className="flex flex-1 justify-center pt-[15px]">
          <svg width="19" height="19" viewBox="0 0 19 19" className="shrink-0">
            <circle cx="9.500" cy="9.500" r="9.300" fill="#414146" />
            <path d="M8 3h3.200v2.600H8zM6.500 7h4.700v6.300h1.600v2H6.500v-2H8V9H6.500z" fill="#fff" />
          </svg>
        </div>
      </div>
      <Footer />
      <Taskbar />
    </div>
  );
}
